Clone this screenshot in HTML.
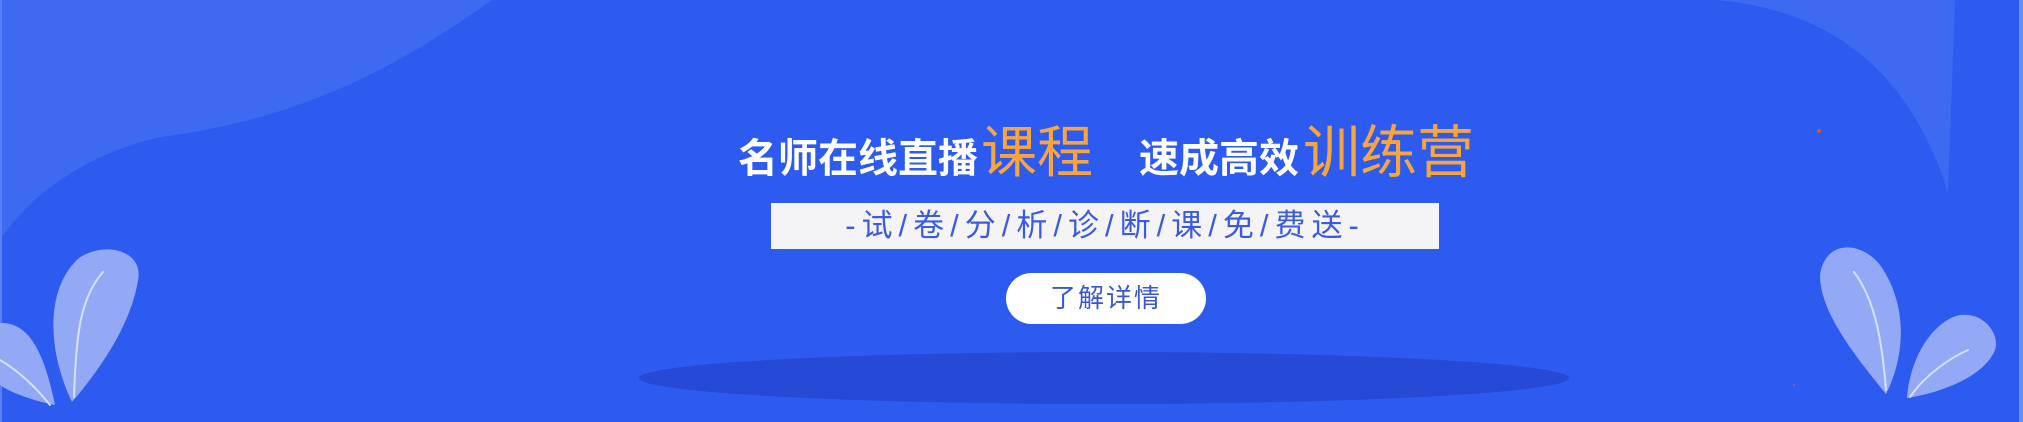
<!DOCTYPE html>
<html><head><meta charset="utf-8"><style>
html,body{margin:0;padding:0;width:2023px;height:422px;overflow:hidden;background:#2d5bf0}
.t{position:absolute;font-family:"Liberation Sans","Noto Sans CJK SC",sans-serif;white-space:nowrap}
</style></head><body>
<svg width="2023" height="422" style="position:absolute;left:0;top:0">
<rect width="2023" height="422" fill="#2d5bf0"/>
<path d="M0 0 L492 0 C380 80 287 120 161 137 C92 152 34 190 0 240 Z" fill="#3e6af2"/>
<rect x="0" y="0" width="2" height="422" fill="#5a7ef4"/>
<path d="M1717 0 C1830 10 1910 70 1948 193 L1955 0 Z" fill="#3e6af2"/>
<rect x="2019" y="0" width="4" height="422" fill="#6a8cf5"/>
<ellipse cx="1104" cy="378" rx="465" ry="26" fill="#2649d6"/>
<g fill="#93a9f6">
<path d="M72 462 C46 402 46 333 80 301 C109 282 144 296 138 327 C132 368 109 414 72 462 Z" transform="translate(0,-60) translate(72,462) scale(1,0.9) translate(-72,-462)"/>
<path d="M55 405 C29 400 6 390 0 385 L0 323 C29 322 44 352 55 405 Z"/>
<path d="M1886 394 C1850 350 1820 310 1820 275 C1825 240 1860 240 1880 265 C1905 300 1908 350 1886 394 Z"/>
<path d="M1907 398 C1910 355 1935 320 1960 315 C1985 312 2000 335 1995 350 C1985 375 1945 392 1907 398 Z"/>
</g>
<g stroke="#d6e0ff" stroke-width="2" fill="none" stroke-linecap="round">
<path d="M74 397 C76 335 80 298 103 272"/>
<path d="M50 405 C34 385 17 370 0 360"/>
<path d="M1886 390 C1882 340 1875 300 1854 272"/>
<path d="M1910 397 C1925 375 1950 358 1968 350"/>
</g>
<circle cx="1819" cy="131" r="2" fill="#e0502a"/>
<rect x="1793" y="384" width="1.5" height="2" fill="#e0502a"/>
</svg>
<div class="t" style="left:738px;top:124px;font-size:40px;line-height:58px;font-weight:bold;color:#fff">名师在线直播<span style="color:#f8a53d;font-size:56px;font-weight:normal;margin-left:3px">课程</span><span style="display:inline-block;width:46px"></span>速成高效<span style="color:#f8a53d;font-size:57px;font-weight:normal;margin-left:4px">训练营</span></div>
<div style="position:absolute;left:771px;top:203px;width:668px;height:46px;background:#f4f4f6"></div>
<div class="t" style="left:771px;top:203px;width:668px;text-align:center;font-size:31px;line-height:46px;letter-spacing:6px;color:#3a5be0">-试/卷/分/析/诊/断/课/免/费送-</div>
<div class="t" style="left:1006px;top:273px;width:200px;height:51px;border-radius:26px;background:#fff;text-align:center;font-size:26px;line-height:51px;letter-spacing:2px;color:#3a55d8">了解详情</div>
</body></html>
